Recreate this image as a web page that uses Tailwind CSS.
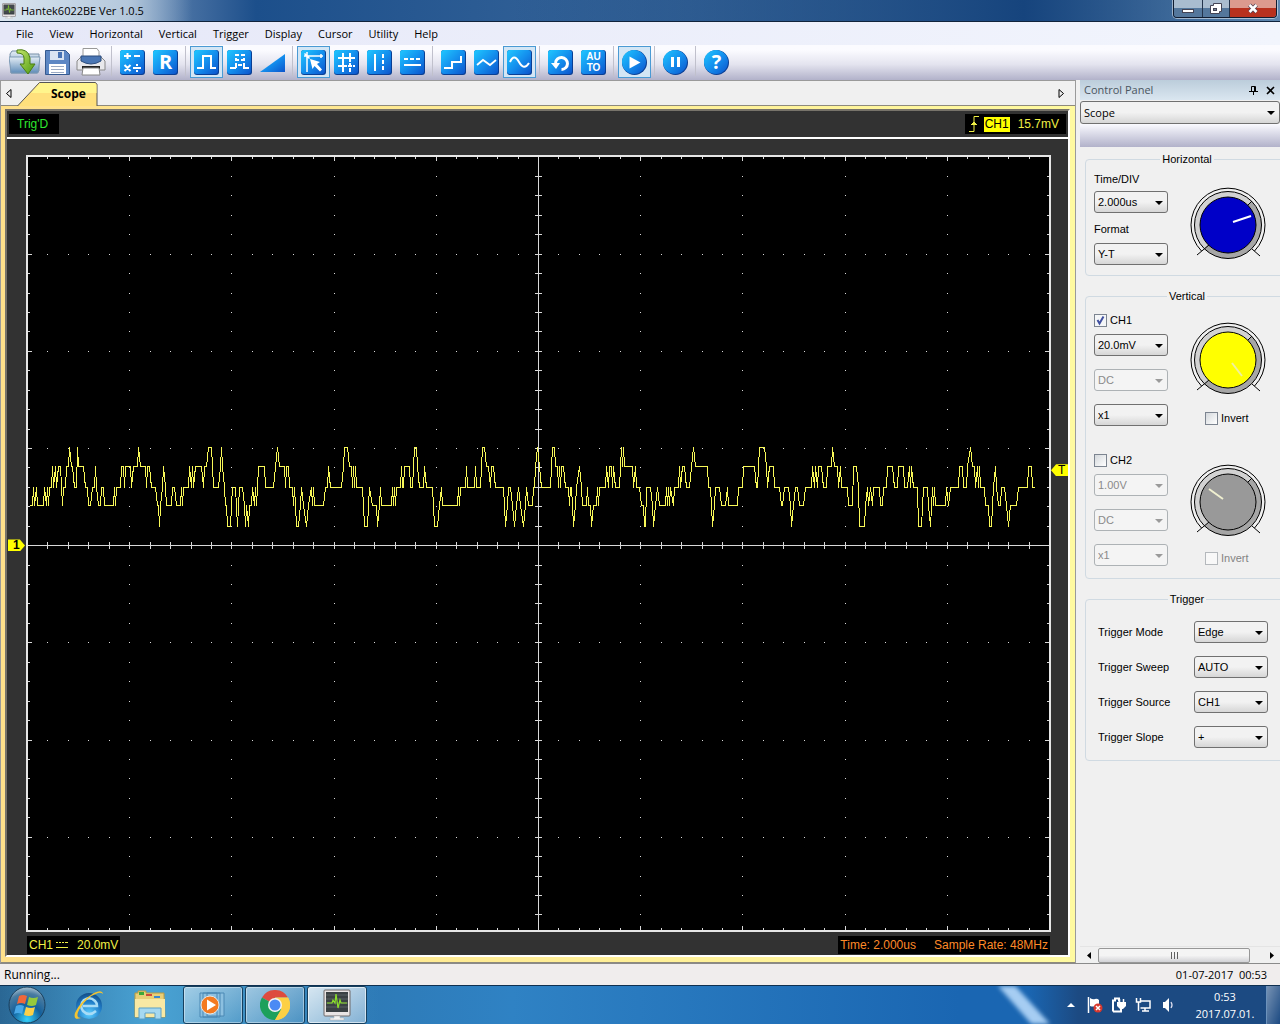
<!DOCTYPE html>
<html lang="en">

<head>
    <meta charset="UTF-8">
    <meta name="viewport" content="width=device-width, initial-scale=1.0">
    <title>Hantek6022BE Ver 1.0.5</title>
    <script src="https://cdn.jsdelivr.net/npm/@tailwindcss/browser@4"></script>
</head>

<body class="h-screen flex flex-col overflow-hidden bg-[#f0f0f0] text-black text-[11px] leading-4 font-['Open_Sans','Noto_Sans',sans-serif]">
    <!-- Shared gradients and shapes -->
    <svg class="absolute w-0 h-0" aria-hidden="true">
        <defs>
            <linearGradient id="blue" x1="0" y1="0" x2="1" y2="1">
                <stop offset="0" stop-color="#20c8ff" />
                <stop offset=".5" stop-color="#1490ee" />
                <stop offset="1" stop-color="#0c54cc" />
            </linearGradient>
            <linearGradient id="ring" x1="0" y1="0" x2="1" y2="1">
                <stop offset=".5" stop-color="#d2d2d2" />
                <stop offset=".5" stop-color="#a6a6a6" />
            </linearGradient>
            <linearGradient id="folder" x1="0" y1="0" x2="0" y2="1">
                <stop offset="0" stop-color="#e4edf5" />
                <stop offset="1" stop-color="#5f8cb8" />
            </linearGradient>
            <linearGradient id="arrow" x1="0" y1="0" x2="1" y2="1">
                <stop offset="0" stop-color="#c4e66a" />
                <stop offset="1" stop-color="#4d9a10" />
            </linearGradient>
            <radialGradient id="orb" cx=".5" cy=".9" r=".9">
                <stop offset="0" stop-color="#35d2fb" />
                <stop offset=".45" stop-color="#14609c" />
                <stop offset=".8" stop-color="#4a7ba0" />
                <stop offset="1" stop-color="#a9c3d4" />
            </radialGradient>
            <radialGradient id="globe" cx=".5" cy=".8" r=".8">
                <stop offset="0" stop-color="#5ed0ff" />
                <stop offset=".6" stop-color="#1f7cc8" />
                <stop offset="1" stop-color="#124c86" />
            </radialGradient>
            <symbol id="tile" viewBox="0 0 25 25">
                <rect width="25" height="25" rx="3" fill="#0a3f94" stroke="none" />
                <rect width="24" height="24" rx="3" fill="url(#blue)" stroke="none" />
            </symbol>
            <symbol id="disc" viewBox="0 0 25 25">
                <circle cx="12.5" cy="12.5" r="12.5" fill="#0a3f94" stroke="none" />
                <circle cx="12" cy="12" r="12" fill="url(#blue)" stroke="none" />
            </symbol>
            <symbol id="down" viewBox="0 0 8 4">
                <path d="M0 0h8L4 4z" fill="currentColor" />
            </symbol>
            <symbol id="dial" viewBox="0 0 78 74">
                <path d="M12.500 64A37 37 0 1 1 65.500 64" fill="none" stroke="#000" />
                <circle cx="39" cy="38" r="33.5" fill="url(#ring)" stroke="#000" />
                <path d="M8 68L20 58M63 62l8 7M58 19l5-5" stroke="#000" />
                <circle cx="39" cy="38" r="28" fill="currentColor" stroke="#000" />
            </symbol>
            <symbol id="monitor" viewBox="0 0 30 32">
                <rect x="2" y="1" width="26" height="26" rx="1" fill="#e8e4e4" stroke="#6e6868" />
                <rect x="4" y="3" width="22" height="20" fill="#3b4144" />
                <path d="M4 6h22M4 10h22M4 14h22M4 18h22" stroke="#5a6265" />
                <path d="M5 14h5l1-3 2 3 1-9 2 14 2-8 1 3h6" fill="none" stroke="#8ce02a" stroke-width="1.200" />
                <path d="M12 27h6v2h4v2H8v-2h4z" fill="#f2f2f2" stroke="#aaa" stroke-width=".5" />
            </symbol>
        </defs>
    </svg>

    <!-- Title bar -->
    <header class="h-[22px] shrink-0 flex items-center pl-px border-b border-[#10233c] bg-linear-to-r from-[#b9cde0] via-[#1c4f8b] via-20% to-[#5f88b0] relative">
        <div class="absolute inset-0 bg-linear-to-r from-[#dbe6f0] via-[#b4c8dc] via-10% to-transparent to-15%"></div>
        <div class="absolute inset-0 bg-linear-to-r from-transparent from-40% via-[#16447d] via-80% to-transparent"></div>
        <svg class="relative w-4 h-4 mr-1"><use href="#monitor" /></svg>
        <h1 class="relative">Hantek6022BE Ver 1.0.5</h1>
        <div class="relative ml-auto mr-[3px] self-start h-[18px] flex border border-t-0 border-[#101c30] rounded-b ring-1 ring-white/50 overflow-hidden">
            <button class="w-7 flex items-center justify-center bg-linear-to-b from-[#a9bccf] from-50% to-[#54779c] to-50%" aria-label="Minimize">
                <svg class="w-3 h-4" viewBox="0 0 12 16"><rect x=".5" y="8.500" width="11" height="3" fill="#fff" stroke="#445" /></svg>
            </button>
            <button class="w-[27px] flex items-center justify-center border-l border-[#23344c] bg-linear-to-b from-[#a9bccf] from-50% to-[#54779c] to-50%" aria-label="Restore">
                <svg class="w-3 h-4" viewBox="0 0 12 16"><path d="M3.500 2.500h8v8h-2v2h-9v-8h3z" fill="#fff" stroke="#445" /><rect x="3.500" y="7.500" width="3" height="2" fill="#789" stroke="#445" /></svg>
            </button>
            <button class="w-[47px] flex items-center justify-center border-l border-[#23344c] bg-linear-to-b from-[#dc9a8e] from-50% to-[#b8311e] to-50%" aria-label="Close">
                <svg class="w-3 h-4" viewBox="0 0 12 16"><path d="M2.500 4l7 7M9.500 4l-7 7" stroke="#545" stroke-width="4" /><path d="M2.500 4l7 7M9.500 4l-7 7" stroke="#fff" stroke-width="2.500" /></svg>
            </button>
        </div>
    </header>

    <!-- Menu -->
    <nav class="h-[23px] shrink-0 flex items-center pl-2 bg-linear-to-r from-[#e6e8f8] to-[#f2f5fd]">
        <a href="#" class="px-2">File</a>
        <a href="#" class="px-2">View</a>
        <a href="#" class="px-2">Horizontal</a>
        <a href="#" class="px-2">Vertical</a>
        <a href="#" class="px-2">Trigger</a>
        <a href="#" class="px-2">Display</a>
        <a href="#" class="px-2">Cursor</a>
        <a href="#" class="px-2">Utility</a>
        <a href="#" class="px-2">Help</a>
    </nav>

    <!-- Toolbar -->
    <div class="h-[35px] shrink-0 flex pt-px pl-2 bg-linear-to-b from-[#fbfbff] from-15% via-[#e4e4ef] via-55% to-[#b2b2ca]">
        <button class="w-[33px] h-8 flex items-center justify-center" aria-label="Open">
            <svg class="w-8 h-[26px] shrink-0" viewBox="0 0 32 26">
                <path d="M1 5l2-3h9l2 3h16v17l-2 2H2z" fill="url(#folder)" stroke="#7890a8" />
                <path d="M0 8h31l-2 16H2z" fill="url(#folder)" stroke="#7d9ab5" />
                <path d="M8 1Q19-1 21 9v6h5l-7 10-8-10h4V9q0-5-7-5z" fill="url(#arrow)" stroke="#4b7d14" />
            </svg>
        </button>
        <button class="w-[33px] h-8 flex items-center justify-center" aria-label="Save">
            <svg class="w-[25px] h-[26px]" viewBox="0 0 25 26">
                <path d="M.5 1.500h20l4 4v20H.5z" fill="#5d87c4" stroke="#35598f" />
                <path d="M5 2h14v9H5z" fill="#d9e4f2" /><path d="M13 3h4v6h-4z" fill="#4873b4" />
                <path d="M4 15h17v10H4z" fill="#fff" /><path d="M6 17.500h13M6 20.500h13M6 23.500h13" stroke="#9aaac4" />
            </svg>
        </button>
        <button class="w-[33px] h-8 flex items-center justify-center" aria-label="Print">
            <svg class="w-[30px] h-7" viewBox="0 0 30 28">
                <path d="M7 .5h14l2 3V12H7z" fill="#fff" stroke="#999" />
                <path d="M1 13l4-4h20l4 4v9H1z" fill="#e8e8ec" stroke="#888" />
                <path d="M5 8h20v5q-10 6-20 0z" fill="#4a76b4" stroke="#2c4c7c" />
                <path d="M6 18h18v3H6z" fill="#222" />
                <path d="M7 20h16l1 7H6z" fill="#fff" stroke="#888" />
            </svg>
        </button>
        <span class="w-px h-[30px] ml-[4px] mr-1 bg-[#c0c0cc]"></span>
        <button class="w-[33px] h-8 flex items-center justify-center" aria-label="Math">
            <svg class="w-[25px] h-[25px]" viewBox="0 0 25 25" fill="none" stroke="#fff" stroke-width="2">
                <use href="#tile" />
                <path d="M4 6h7M7.500 3v6M14 6h6M4.500 15l6 6M10.500 15l-6 6M13 18h8M17 14v2M17 20v2" />
            </svg>
        </button>
        <button class="w-[33px] h-8 flex items-center justify-center" aria-label="Reference">
            <span class="w-[25px] h-[25px] relative text-white font-bold text-[20px] leading-6"><svg class="absolute inset-0 w-full h-full"><use href="#tile" /></svg><span class="relative">R</span></span>
        </button>
        <span class="w-px h-[30px] ml-[3px] mr-1 bg-[#c0c0cc]"></span>
        <button class="w-[33px] h-8 flex items-center justify-center border border-[#4a9ad4] bg-[#d3e6f5]" aria-label="Pulse">
            <svg class="w-[25px] h-[25px] shrink-0" viewBox="0 0 25 25" fill="none" stroke="#fff" stroke-width="2">
                <use href="#tile" />
                <path d="M3 18h6V6h8v12h5" />
            </svg>
        </button>
        <button class="w-[33px] h-8 flex items-center justify-center" aria-label="Dashed pulse">
            <svg class="w-[25px] h-[25px]" viewBox="0 0 25 25" fill="none" stroke="#fff" stroke-width="2">
                <use href="#tile" />
                <path d="M3 18h6M16 18h6M8 5h4M14 5h4M9 8v3M9 13v5M17 8v3M17 13v5M9 10h3M14 10h3M11 15h4" />
            </svg>
        </button>
        <button class="w-[33px] h-8 flex items-center justify-center" aria-label="Ramp">
            <svg class="w-[25px] h-[25px]" viewBox="0 0 25 25"><path d="M0 22L25 4v18z" fill="url(#blue)" /></svg>
        </button>
        <span class="w-px h-[30px] ml-[3px] mr-1 bg-[#c0c0cc]"></span>
        <button class="w-[33px] h-8 flex items-center justify-center border border-[#4a9ad4] bg-[#d3e6f5]" aria-label="Cursor">
            <svg class="w-[25px] h-[25px] shrink-0" viewBox="0 0 25 25" fill="none" stroke="#fff" stroke-width="2">
                <use href="#tile" />
                <path d="M6 2v20M3 6h19M3.500 3.500l5 5M20 4v4" stroke-width="1.500" />
                <path d="M9 9l10 3-3 2 5 5.500-2 2-5.500-5.500-2 3z" fill="#fff" stroke="none" />
            </svg>
        </button>
        <button class="w-[33px] h-8 flex items-center justify-center" aria-label="Cross cursor">
            <svg class="w-[25px] h-[25px]" viewBox="0 0 25 25" fill="none" stroke="#fff" stroke-width="2">
                <use href="#tile" />
                <path d="M9 3v19M4 8h17" /><path d="M16 3v19M4 16h17" stroke-dasharray="4 1" />
            </svg>
        </button>
        <button class="w-[33px] h-8 flex items-center justify-center" aria-label="Vertical cursor">
            <svg class="w-[25px] h-[25px]" viewBox="0 0 25 25" fill="none" stroke="#fff" stroke-width="2">
                <use href="#tile" />
                <path d="M8 4v17" /><path d="M16 4v17" stroke-dasharray="4 2" />
            </svg>
        </button>
        <button class="w-[33px] h-8 flex items-center justify-center" aria-label="Horizontal cursor">
            <svg class="w-[25px] h-[25px]" viewBox="0 0 25 25" fill="none" stroke="#fff" stroke-width="2">
                <use href="#tile" />
                <path d="M4 15h17" /><path d="M4 9h17" stroke-dasharray="4 2" />
            </svg>
        </button>
        <span class="w-px h-[30px] ml-[3px] mr-1 bg-[#c0c0cc]"></span>
        <button class="w-[33px] h-8 flex items-center justify-center" aria-label="Step">
            <svg class="w-[25px] h-[25px]" viewBox="0 0 25 25" fill="none" stroke="#fff" stroke-width="2">
                <use href="#tile" />
                <path d="M3 18h8v-6h9V6" />
            </svg>
        </button>
        <button class="w-[33px] h-8 flex items-center justify-center" aria-label="Linear">
            <svg class="w-[25px] h-[25px]" viewBox="0 0 25 25" fill="none" stroke="#fff" stroke-width="1.800">
                <use href="#tile" />
                <path d="M3 15l6-5 7 5 6-5" />
            </svg>
        </button>
        <button class="w-[33px] h-8 flex items-center justify-center border border-[#4a9ad4] bg-[#d3e6f5]" aria-label="Sine">
            <svg class="w-[25px] h-[25px] shrink-0" viewBox="0 0 25 25" fill="none" stroke="#fff" stroke-width="2">
                <use href="#tile" />
                <path d="M3 12q4-9 9 0 5 9 10 1" />
            </svg>
        </button>
        <span class="w-px h-[30px] ml-[3px] mr-1 bg-[#c0c0cc]"></span>
        <button class="w-[33px] h-8 flex items-center justify-center" aria-label="Refresh">
            <svg class="w-[25px] h-[25px]" viewBox="0 0 25 25" fill="none" stroke="#fff" stroke-width="3">
                <use href="#tile" />
                <path d="M7.500 13a6 6 0 1 1 6 6.500" /><path d="M3 13h9l-4 6z" fill="#fff" stroke="none" />
            </svg>
        </button>
        <button class="w-[33px] h-8 flex items-center justify-center" aria-label="Auto set">
            <span class="w-[25px] h-[25px] relative text-white font-bold text-[10px] leading-[11px] pt-px font-['Liberation_Sans',Arial,sans-serif]"><svg class="absolute inset-0 w-full h-full"><use href="#tile" /></svg><span class="relative block">AU</span><span class="relative block">TO</span></span>
        </button>
        <span class="w-px h-[30px] ml-[3px] mr-1 bg-[#c0c0cc]"></span>
        <button class="w-[33px] h-8 flex items-center justify-center border border-[#4a9ad4] bg-[#d3e6f5]" aria-label="Run">
            <svg class="w-[25px] h-[25px] shrink-0" viewBox="0 0 25 25"><use href="#disc" /><path d="M7.500 6.500L18.500 12.500l-11 6z" fill="#fff" /></svg>
        </button>
        <span class="w-px h-[30px] ml-[3px] mr-1 bg-[#c0c0cc]"></span>
        <button class="w-[33px] h-8 flex items-center justify-center" aria-label="Pause">
            <svg class="w-[25px] h-[25px]" viewBox="0 0 25 25"><use href="#disc" /><path d="M8 7h3v10H8zM14 7h3v10h-3z" fill="#fff" /></svg>
        </button>
        <span class="w-px h-[30px] ml-[3px] mr-1 bg-[#c0c0cc]"></span>
        <button class="w-[33px] h-8 flex items-center justify-center" aria-label="About">
            <span class="w-[25px] h-[25px] relative text-white font-bold text-[20px] leading-6"><svg class="absolute inset-0 w-full h-full"><use href="#disc" /></svg><span class="relative">?</span></span>
        </button>
    </div>

    <div class="flex-1 min-h-0 flex">
        <!-- Scope -->
        <main class="flex-1 min-w-0 flex flex-col border-x border-[#9a9a9a] mr-1 border-t font-['Liberation_Sans',Arial,sans-serif]">
            <div class="h-6 shrink-0 flex items-center px-1 text-[12px] font-['Open_Sans','Noto_Sans',sans-serif]">
                <button aria-label="Previous tab"><svg class="w-2 h-[9px]" viewBox="0 0 8 9"><path d="M6 .5v8L1.500 4.500z" fill="none" stroke="#000" /></svg></button>
                <div class="relative w-[81px] h-6 ml-1 self-end">
                    <svg class="absolute inset-0 w-full h-[25px]" viewBox="0 0 81 25">
                        <path d="M.5 25L22.500 1.500h56l1.500 2V25" fill="#ffe07c" stroke="#555" />
                        <path d="M14 12L23 2h55l1.500 2v8z" fill="#fff58c" />
                    </svg>
                    <a href="#" class="relative block pl-[34px] pt-[5px] font-bold">Scope</a>
                </div>
                <button class="ml-auto mr-[6px]" aria-label="Next tab"><svg class="w-2 h-[9px]" viewBox="0 0 8 9"><path d="M2 .5v8l4.500-4z" fill="none" stroke="#000" /></svg></button>
            </div>
            <div class="flex-1 min-h-0 border-y border-[#8e8a7c] bg-linear-to-r from-[#ffe08a] to-[#fffaa0] pl-[4px] pr-[5px] pt-[3px] pb-[5px] flex">
                <div class="flex-1 min-w-0 flex flex-col bg-[#323232] border-2 border-[#77736a] border-r-white border-b-white">
                    <div class="h-[26px] shrink-0 flex items-center px-[2px] text-[12px] leading-5">
                        <span class="bg-black text-[#2ee62e] px-2 w-[50px]">Trig'D</span>
                        <span class="ml-auto bg-black text-[#f0f046] flex items-center pl-1 pr-[7px]">
                            <svg class="w-[10px] h-[18px] mr-[5px]" viewBox="0 0 10 18"><path d="M0 16.500h5V1.500h5M2 9.500h6M3 8.500h4M4 7.500h2" fill="none" stroke="#f0f046" /></svg>
                            <span class="bg-[#ffff00] text-black leading-[15px] px-px mr-2">CH1</span>15.7mV
                        </span>
                    </div>
                    <div class="h-[2px] shrink-0 bg-white"></div>
                    <div class="flex-1 min-h-0 pt-4 pl-[19px] pr-[17px] flex relative">
                        <svg id="screen" class="w-full h-full bg-black" viewBox="26 155 1025 777" preserveAspectRatio="none" shape-rendering="crispEdges">
                            <path id="grid" fill="#d8d8d8" />
                            <path d="M27 156h1023v775H27z" fill="none" stroke="#e6e6e6" stroke-width="2" />
                            <path d="M28 545.500h1021M538.500 157v773" stroke="#d8d8d8" />
                            <path id="trace" fill="none" stroke="#f8f858" />
                        </svg>
                        <!-- channel and trigger level markers -->
                        <span class="absolute left-px top-[50.5%] w-[17px] h-3 bg-[#ffff00] text-[12px] leading-3 font-bold pl-[5px] [clip-path:polygon(0_0,70%_0,100%_50%,70%_100%,0_100%)]">1</span>
                        <span class="absolute right-0 top-[41%] w-[17px] h-3 bg-[#ffff00] text-[12px] leading-3 pl-[7px] [clip-path:polygon(30%_0,100%_0,100%_100%,30%_100%,0_50%)]">T</span>
                    </div>
                    <div class="h-[23px] shrink-0 pl-5 pr-[18px] pt-[2px] flex items-center text-[12px] leading-[18px]">
                        <span class="bg-black text-[#f0f046] flex items-center px-[2px]">CH1
                            <svg class="w-3 h-2 ml-[3px] mr-[9px]" viewBox="0 0 12 8"><path d="M0 1.500h12M0 6.500h12" stroke="#f0f046" fill="none" /><path d="M2.500 1v1M5.500 1v1M8.500 1v1" stroke="#000" /></svg>
                            20.0mV</span>
                        <span class="ml-auto bg-black text-[#ff8a28] flex gap-[18px] px-[2px]"><span>Time: 2.000us</span><span>Sample Rate: 48MHz</span></span>
                    </div>
                </div>
            </div>
        </main>

        <!-- Control panel -->
        <aside class="w-[200px] shrink-0 flex flex-col overflow-hidden font-['Liberation_Sans',Arial,sans-serif]">
            <div class="h-5 shrink-0 flex items-center pl-1 pr-1 bg-linear-to-b from-[#bccddb] to-[#dae6f0] text-[#4a5560] font-['Open_Sans','Noto_Sans',sans-serif]">
                <h2>Control Panel</h2>
                <button class="ml-auto mr-2" aria-label="Pin"><svg class="w-[9px] h-[9px]" viewBox="0 0 9 9"><path d="M2.500 5.500v-5h4v5M5.500 0v6M0 5.500h9M4.500 6v3" fill="none" stroke="#000" /></svg></button>
                <button class="mr-px" aria-label="Close panel"><svg class="w-[9px] h-[9px]" viewBox="0 0 9 9"><path d="M1 1l7 7M8 1L1 8" stroke="#000" stroke-width="1.600" /></svg></button>
            </div>
            <div class="relative h-[23px] mt-px shrink-0 font-['Open_Sans','Noto_Sans',sans-serif]">
                <select aria-label="Panel" class="appearance-none w-full h-full pl-[3px] leading-4 rounded-[3px] border border-[#707070] bg-linear-to-b from-[#f2f2f2] from-50% to-[#d6d6d6]">
                    <option>Scope</option>
                </select>
                <svg class="absolute right-[5px] top-[10px] w-2 h-1 pointer-events-none"><use href="#down" /></svg>
            </div>
            <div class="h-[23px] shrink-0 bg-linear-to-b from-[#fafaff] to-[#b2b2ca]"></div>

            <div class="flex-1 min-h-0 overflow-hidden pl-[5px] pt-[6px]">
                <fieldset class="w-[204px] h-[123px] border border-[#d0dae2] rounded px-2 pt-[6px] flex">
                    <legend class="mx-auto px-[2px] leading-3">Horizontal</legend>
                    <div class="w-[74px] flex flex-col">
                        <label for="timediv">Time/DIV</label>
                        <div class="relative h-[22px] mt-1">
                            <select id="timediv" class="appearance-none w-full h-full pl-[3px] leading-4 rounded-[3px] border border-[#707070] bg-linear-to-b from-[#f2f2f2] from-50% to-[#d6d6d6]"><option>2.000us</option></select>
                            <svg class="absolute right-[5px] top-[10px] w-2 h-1 pointer-events-none"><use href="#down" /></svg>
                        </div>
                        <label for="format" class="mt-2">Format</label>
                        <div class="relative h-[22px] mt-[6px]">
                            <select id="format" class="appearance-none w-full h-full pl-[3px] leading-4 rounded-[3px] border border-[#707070] bg-linear-to-b from-[#f2f2f2] from-50% to-[#d6d6d6]"><option>Y-T</option></select>
                            <svg class="absolute right-[5px] top-[10px] w-2 h-1 pointer-events-none"><use href="#down" /></svg>
                        </div>
                    </div>
                    <svg class="w-[78px] h-[74px] ml-[21px] mt-4 text-[#0000c8]" viewBox="0 0 78 74"><use href="#dial" /><path d="M44 35l18-6" stroke="#fff" stroke-width="2" /></svg>
                </fieldset>

                <fieldset class="w-[204px] mt-[14px] border border-[#d0dae2] rounded px-2 pt-[10px] pb-3">
                    <legend class="mx-auto px-[2px] leading-3">Vertical</legend>
                    <div class="flex">
                        <div class="w-[74px] flex flex-col">
                            <label class="flex items-center gap-[3px]">
                                <span class="relative w-[13px] h-[13px]">
                                    <input type="checkbox" checked class="appearance-none block w-[13px] h-[13px] border border-[#7c8490] bg-[#f4f6f8]">
                                    <svg class="absolute inset-0 w-[13px] h-[13px] pointer-events-none" viewBox="0 0 13 13"><path d="M3.500 6l2 3.500 4-7" fill="none" stroke="#4050a0" stroke-width="2" /></svg>
                                </span>CH1
                            </label>
                            <div class="relative h-[22px] mt-[6px]">
                                <select aria-label="CH1 volts" class="appearance-none w-full h-full pl-[3px] leading-4 rounded-[3px] border border-[#707070] bg-linear-to-b from-[#f2f2f2] from-50% to-[#d6d6d6]"><option>20.0mV</option></select>
                                <svg class="absolute right-[5px] top-[10px] w-2 h-1 pointer-events-none"><use href="#down" /></svg>
                            </div>
                            <div class="relative h-[22px] mt-[13px]">
                                <select aria-label="CH1 coupling" disabled class="appearance-none w-full h-full pl-[3px] leading-4 rounded-[3px] border border-[#adb2b5] bg-[#f4f4f4] text-[#8a8a8a] opacity-100"><option>DC</option></select>
                                <svg class="absolute right-[5px] top-[10px] w-2 h-1 pointer-events-none text-[#9a9a9a]"><use href="#down" /></svg>
                            </div>
                            <div class="relative h-[22px] mt-[13px]">
                                <select aria-label="CH1 probe" class="appearance-none w-full h-full pl-[3px] leading-4 rounded-[3px] border border-[#707070] bg-linear-to-b from-[#f2f2f2] from-50% to-[#d6d6d6]"><option>x1</option></select>
                                <svg class="absolute right-[5px] top-[10px] w-2 h-1 pointer-events-none"><use href="#down" /></svg>
                            </div>
                        </div>
                        <div class="ml-[21px]">
                            <svg class="w-[78px] h-[74px] mt-[10px] text-[#ffff00]" viewBox="0 0 78 74"><use href="#dial" /><path d="M43 41l10 13" stroke="#f0f0a0" stroke-width="2" /></svg>
                            <label class="flex items-center gap-[3px] ml-[16px] mt-[14px]">
                                <input type="checkbox" class="appearance-none w-[13px] h-[13px] border border-[#7c8490] bg-linear-to-br from-[#d4d8dc] to-white">Invert
                            </label>
                        </div>
                    </div>
                    <div class="flex mt-[26px]">
                        <div class="w-[74px] flex flex-col">
                            <label class="flex items-center gap-[3px]">
                                <input type="checkbox" class="appearance-none w-[13px] h-[13px] border border-[#7c8490] bg-linear-to-br from-[#d4d8dc] to-white">CH2
                            </label>
                            <div class="relative h-[22px] mt-[6px]">
                                <select aria-label="CH2 volts" disabled class="appearance-none w-full h-full pl-[3px] leading-4 rounded-[3px] border border-[#adb2b5] bg-[#f4f4f4] text-[#8a8a8a] opacity-100"><option>1.00V</option></select>
                                <svg class="absolute right-[5px] top-[10px] w-2 h-1 pointer-events-none text-[#9a9a9a]"><use href="#down" /></svg>
                            </div>
                            <div class="relative h-[22px] mt-[13px]">
                                <select aria-label="CH2 coupling" disabled class="appearance-none w-full h-full pl-[3px] leading-4 rounded-[3px] border border-[#adb2b5] bg-[#f4f4f4] text-[#8a8a8a] opacity-100"><option>DC</option></select>
                                <svg class="absolute right-[5px] top-[10px] w-2 h-1 pointer-events-none text-[#9a9a9a]"><use href="#down" /></svg>
                            </div>
                            <div class="relative h-[22px] mt-[13px]">
                                <select aria-label="CH2 probe" disabled class="appearance-none w-full h-full pl-[3px] leading-4 rounded-[3px] border border-[#adb2b5] bg-[#f4f4f4] text-[#8a8a8a] opacity-100"><option>x1</option></select>
                                <svg class="absolute right-[5px] top-[10px] w-2 h-1 pointer-events-none text-[#9a9a9a]"><use href="#down" /></svg>
                            </div>
                        </div>
                        <div class="ml-[21px]">
                            <svg class="w-[78px] h-[74px] mt-3 text-[#999999]" viewBox="0 0 78 74"><use href="#dial" /><path d="M20 25l14 10" stroke="#f0f0d0" stroke-width="2" /></svg>
                            <label class="flex items-center gap-[3px] ml-[16px] mt-3 text-[#838383]">
                                <input type="checkbox" disabled class="appearance-none w-[13px] h-[13px] border border-[#b4b8bc] bg-[#f8f8f8]">Invert
                            </label>
                        </div>
                    </div>
                </fieldset>

                <fieldset class="w-[204px] mt-[14px] border border-[#d0dae2] rounded px-3 pt-4 pb-3 flex flex-col gap-[13px]">
                    <legend class="mx-auto px-[2px] leading-3">Trigger</legend>
                    <div class="flex items-center">
                        <label for="mode" class="w-24">Trigger Mode</label>
                        <div class="relative w-[74px] h-[22px]">
                            <select id="mode" class="appearance-none w-full h-full pl-[3px] leading-4 rounded-[3px] border border-[#707070] bg-linear-to-b from-[#f2f2f2] from-50% to-[#d6d6d6]"><option>Edge</option></select>
                            <svg class="absolute right-[5px] top-[10px] w-2 h-1 pointer-events-none"><use href="#down" /></svg>
                        </div>
                    </div>
                    <div class="flex items-center">
                        <label for="sweep" class="w-24">Trigger Sweep</label>
                        <div class="relative w-[74px] h-[22px]">
                            <select id="sweep" class="appearance-none w-full h-full pl-[3px] leading-4 rounded-[3px] border border-[#707070] bg-linear-to-b from-[#f2f2f2] from-50% to-[#d6d6d6]"><option>AUTO</option></select>
                            <svg class="absolute right-[5px] top-[10px] w-2 h-1 pointer-events-none"><use href="#down" /></svg>
                        </div>
                    </div>
                    <div class="flex items-center">
                        <label for="source" class="w-24">Trigger Source</label>
                        <div class="relative w-[74px] h-[22px]">
                            <select id="source" class="appearance-none w-full h-full pl-[3px] leading-4 rounded-[3px] border border-[#707070] bg-linear-to-b from-[#f2f2f2] from-50% to-[#d6d6d6]"><option>CH1</option></select>
                            <svg class="absolute right-[5px] top-[10px] w-2 h-1 pointer-events-none"><use href="#down" /></svg>
                        </div>
                    </div>
                    <div class="flex items-center">
                        <label for="slope" class="w-24">Trigger Slope</label>
                        <div class="relative w-[74px] h-[22px]">
                            <select id="slope" class="appearance-none w-full h-full pl-[3px] leading-4 rounded-[3px] border border-[#707070] bg-linear-to-b from-[#f2f2f2] from-50% to-[#d6d6d6]"><option>+</option></select>
                            <svg class="absolute right-[5px] top-[10px] w-2 h-1 pointer-events-none"><use href="#down" /></svg>
                        </div>
                    </div>
                </fieldset>
            </div>

            <!-- Horizontal scrollbar -->
            <div class="h-[17px] shrink-0 flex items-center bg-[#f0f0f0] border-t border-[#e4e4e4]">
                <button class="w-[18px] flex justify-center" aria-label="Scroll left"><svg class="w-1 h-[7px]" viewBox="0 0 4 7"><path d="M4 0v7L0 3.500z" /></svg></button>
                <div class="w-[152px] h-[15px] flex items-center justify-center gap-[2px] rounded-[2px] border border-[#979797] bg-linear-to-b from-[#f4f4f4] from-50% to-[#d2d2d6]">
                    <span class="w-px h-[7px] bg-[#606060]"></span><span class="w-px h-[7px] bg-[#606060]"></span><span class="w-px h-[7px] bg-[#606060]"></span>
                </div>
                <button class="ml-auto mr-[6px]" aria-label="Scroll right"><svg class="w-1 h-[7px]" viewBox="0 0 4 7"><path d="M0 0v7l4-3.500z" /></svg></button>
            </div>
        </aside>
    </div>

    <!-- Status bar -->
    <div class="h-[22px] shrink-0 flex items-center justify-between pl-1 pr-[13px] border-t border-[#8a8a8a] bg-[#f0eded]">
        <span class="text-[12px]">Running...</span>
        <span class="whitespace-pre">01-07-2017  00:53</span>
    </div>

    <!-- Taskbar -->
    <footer class="h-[39px] shrink-0 flex items-center relative overflow-hidden border-t border-[#0f3050] bg-linear-to-r from-[#2a6794] via-[#2f82c4] via-40% to-[#1a66b2] to-75% text-white">
        <div class="absolute inset-y-0 left-0 w-[380px] bg-linear-to-r from-transparent via-[#4aa3d4] via-40% to-transparent"></div>
        <div class="absolute inset-y-0 right-0 w-[252px] bg-linear-to-r from-transparent to-[#1c4a82] to-20%"></div>
        <div class="absolute inset-y-0 right-[225px] w-[62px] blur-[2px]"><div class="w-full h-full bg-[#a6cdf2] [clip-path:polygon(8%_0,36%_0,92%_100%,62%_100%)]"></div></div>
        <button class="relative ml-2 w-[38px] h-[38px]" aria-label="Start">
            <svg class="w-full h-full" viewBox="0 0 38 38">
                <circle cx="19" cy="19" r="18" fill="url(#orb)" stroke="#1a3f5c" />
                <path d="M11 10q4-2 8 0l-2 8q-4-2-8 0z" fill="#f0673a" /><path d="M21 11q4 2 9 0l-2 8q-4 2-9 0z" fill="#96c93c" />
                <path d="M8 20q4-2 8 0l-2 8q-4-2-8 0z" fill="#48a8e8" /><path d="M18 21q5 2 9 0l-2 8q-4 2-9 0z" fill="#fcd048" />
            </svg>
        </button>
        <button class="relative ml-[26px] w-8 h-8" aria-label="Internet Explorer">
            <svg class="w-full h-full" viewBox="0 0 32 32">
                <circle cx="17" cy="17" r="13" fill="url(#globe)" />
                <path d="M24 22q-7 6-13 0-4-6 1-11 6-4 11 1 2 2 2 5H11" fill="none" stroke="#a8dcf6" stroke-width="2.500" />
                <path d="M31 5Q30 0 22 4 8 12 3 24q-2 8 6 5-6 0-2-8Q14 8 26 4q3-1 5 1z" fill="#f4c430" />
            </svg>
        </button>
        <button class="relative ml-[30px] w-8 h-[30px]" aria-label="Explorer">
            <svg class="w-full h-full" viewBox="0 0 32 30">
                <path d="M1 3h3V1h8v2h18v2l1 22H1z" fill="#e8cf78" stroke="#b89a40" />
                <path d="M5 2h5v3H5z" fill="#3aa83a" /><path d="M12 4h6v2h-6z" fill="#d04a3a" /><path d="M20 6h6v2h-6z" fill="#3a88d0" />
                <path d="M1 9h30v18H1z" fill="#f8e8a4" />
                <path d="M5 29V18h22v11h-6v-6H11v6z" fill="#a5d8f0" stroke="#5aa0c8" />
            </svg>
        </button>
        <button class="relative ml-[17px] w-[60px] h-[38px] flex items-center justify-center border border-[#16405f] rounded-[3px] bg-linear-to-br from-white/50 to-white/10 inset-ring inset-ring-white/40" aria-label="Media Player">
            <svg class="w-7 h-[26px]" viewBox="0 0 28 26">
                <path d="M8 1h17v23H8zM4 1h17v24H4zM1 1h17v24H1z" fill="#8cc0e0" stroke="#4a88b4" />
                <circle cx="11" cy="13" r="9" fill="#f47a20" stroke="#e8e8e8" /><path d="M8 7.500l9 5.500-9 5.500z" fill="#fff" />
            </svg>
        </button>
        <button class="relative ml-[2px] w-[60px] h-[38px] flex items-center justify-center border border-[#16405f] rounded-[3px] bg-linear-to-br from-white/50 to-white/10 inset-ring inset-ring-white/40" aria-label="Chrome">
            <svg class="w-[30px] h-[30px]" viewBox="0 0 30 30">
                <path d="M15 15L2 7.500A15 15 0 0 1 28 7.500H15z" fill="#dd4b3e" />
                <path d="M15 15L28 7.500A15 15 0 0 1 15 30L22 15z" fill="#fdd045" />
                <path d="M15 15l6.500 4L15 30A15 15 0 0 1 2 7.500z" fill="#1da05c" />
                <path d="M15 7.500h13A15 15 0 0 1 15 30l6.500-11z" fill="#fdd045" />
                <circle cx="15" cy="15" r="7" fill="#f4f4f4" /><circle cx="15" cy="15" r="5.500" fill="#4a8af4" />
            </svg>
        </button>
        <button class="relative ml-[2px] w-[60px] h-[38px] flex items-center justify-center border border-[#16405f] rounded-[3px] bg-linear-to-br from-white/80 to-white/40 inset-ring inset-ring-white/60" aria-label="Hantek6022BE">
            <svg class="w-[30px] h-8"><use href="#monitor" /></svg>
        </button>

        <div class="relative ml-auto flex items-center h-full">
            <button class="mr-3" aria-label="Show hidden icons"><svg class="w-2 h-1" viewBox="0 0 8 4"><path d="M0 4h8L4 0z" fill="#fff" /></svg></button>
            <svg class="w-4 h-4 mr-2" viewBox="0 0 16 16"><path d="M1.500 0v16" stroke="#fff" stroke-width="1.500" /><path d="M3 1q3 2 5 1t4 1v7q-2-2-4-1t-5 0z" fill="#fff" /><circle cx="11" cy="11" r="4.500" fill="#d8382e" /><path d="M9 9l4 4M13 9l-4 4" stroke="#fff" stroke-width="1.500" /></svg>
            <svg class="w-4 h-4 mr-2" viewBox="0 0 16 16"><path d="M2 14.500V3.500h2v-2h4v2h1M2 14.500h8v-3" fill="none" stroke="#fff" stroke-width="2" /><path d="M6 5h9v4l-3 3H9L6 9z" fill="#fff" /><path d="M8.500 2v3M12.500 2v3" stroke="#fff" stroke-width="1.500" /></svg>
            <svg class="w-4 h-4 mr-[10px]" viewBox="0 0 16 16" fill="none" stroke="#fff" stroke-width="1.500"><path d="M6 4h9v7H5.500M1.500 1v4h4V1M3.500 5v9M7 14h7M10 11v3" /></svg>
            <svg class="w-4 h-4 mr-[18px]" viewBox="0 0 16 16"><path d="M2 5h2l4-4v14l-4-4H2z" fill="#fff" /><path d="M10 5q2 3 0 6" fill="none" stroke="#dde" stroke-width="1.300" /></svg>
            <div class="w-[60px] mr-[11px] text-center leading-[17px]">0:53<br>2017.07.01.</div>
            <button class="w-[14px] h-full border-l border-[#6c92bc] bg-linear-to-br from-white/40 to-transparent" aria-label="Show desktop"></button>
        </div>
    </footer>

    <script>
        // vertical levels of the sampled signal
        const levels = { A: 447, B: 466, C: 487, D: 505, E: 526 };
        const samples = `29D 32D 33C 34D 36C 37D 43D 44C 46D 47C 48D 49C 51C 52B 53C 55B 56C 58B 60B 62D 63C 65C 66B 68B 69A 71B 72B 74C 76C 77A 78B 83B 85C 87C 88D 90D 92C 94C 95B 96C 98D 100D 101C 103C 104D
            113D 114C 115D 116C 120C 121B 123B 124C 125B 130B 131C 133B 137B 138A 140B 145B 146C 147B 149B 151C 155C 157D 158D 159E 160D 162C 163B 165C 166D 171D 172C 174C 176D 180D 181C 182D 183C 188C 189B 191C 192B 193C 195B
            201B 203C 204B 206B 208A 211A 212B 213C 218C 220B 221A 222B 224C 225D 226D 227E 230E 231D 232C 235C 237E 239C 242C 244D 245E 246D 248E 249D 251D 252C 254D 255C 256D 257C 258B 264B 265C 273C 275B 277A 279B 284B 285C 286B 288B 289C 292C 293D 294C 295D 296E 298E
            300D 301C 303D 306E 308D 311C 312D 313C 314D 323D 325C 327C 328B 330C 341C 343B 344A 347A 349B 351B 352C 353B 354C 355B 356C 362C 363D 364E 367E 368D 369C 372D 376D 377E 379D 380C 381D 391D 392C 393D 394C 395D 396C
            400C 401B 402C 403C 404B 409B 410C 412C 413B 414A 416A 417B 419C 423C 424B 426C 432C 433D 434E 437E 439D 441C 442D 457D 458C 459D 460C 465C 466B 467C 474C 475B 476C 480C 481B 482A 484A 486B 488B 490C 491B 493B 495C
            503C 504D 505E 507D 508C 510C 512D 514E 516D 518C 520D 523E 525D 526C 528D 532D 533C 534C 535B 537A 539B 541C 550C 551B 552A 554A 555B 557B 558C 559B 560C 561B 563B 565C 568C 569D 570C 571C 572D 573E 575D 576C 579B 581C 582D 586D 587C 588D 590D 591E 593D 596D 597C 598D 599C
            605C 606B 608C 609B 611B 612C 613B 615C 619C 620B 621A 622B 623A 624B 632B 633C 635B 636C 639C 641D 643D 644E 645E 646C 650C 652D 653E 655D 657C 659D 665D 666C 667D 668C 669D 670C 673D 674C 678C 679B 680C 682B 684B 686C 689C 691B 693A 695B
            707B 708C 710C 711D 712E 714D 715C 719C 721D 725D 727C 728D 737D 738C 742C 743B 754B 756C 757C 758B 759A 764A 766B 767C 769B 773B 774C 779C 781D 782D 784C 788C 790D 791E 793D 795C 797C 799D
            803D 805C 811C 812B 814C 815B 817C 818B 821B 823C 826C 827B 831B 832A 834B 837B 838C 840B 841C 847C 848D 852D 853B 856B 858C 859E 862E 864E 865D 867C 868D 870C 872D 873C 879C 880D 882D 883C 886C 887B 892B 894C 897C 898B
            903B 904C 907C 909B 910C 911B 913C 917C 918E 921E 923C 927C 928D 930E 932C 933D 934C 935D 945D 946C 948D 950C 958C 959B 962B 963C 966C 967B 970A 972B 974B 975C 977B 978C 979B 980C 984C 985D 988D 989E 991E 992D 993C 995B 996C 998D
            1000D 1001C 1004C 1006D 1008E 1010D 1016D 1018C 1027C 1028B 1031B 1032C 1034C`;

        const points = samples.trim().split(/\s+/).map((s) => `${parseInt(s)}.5 ${levels[s.slice(-1)]}.5`);
        document.getElementById("trace").setAttribute("d", "M" + points.join("L"));

        // graticule: 10 x 8 divisions, 5 minor steps each
        const box = (x, y, w, h) => `M${x} ${y}h${w}v${h}h${-w}z`;
        let grid = "";
        for (let i = 1; i < 50; i++) {
            const x = Math.round(27 + i * 20.44);
            const major = i % 5 === 0;
            const len = major ? 4 : 2;
            grid += box(x, 157, 1, len) + box(x, 930 - len, 1, len) + box(x, 542, 1, 7);
            for (let j = 1; j < 40; j++) {
                if (major || j % 5 === 0) grid += box(x, Math.round(156.6 + j * 19.43), 1, 1);
            }
        }
        for (let j = 1; j < 40; j++) {
            const y = Math.round(156.6 + j * 19.43);
            const len = j % 5 === 0 ? 4 : 2;
            grid += box(28, y, len, 1) + box(1049 - len, y, len, 1) + box(535, y, 7, 1);
        }
        document.getElementById("grid").setAttribute("d", grid);
    </script>
</body>

</html>
